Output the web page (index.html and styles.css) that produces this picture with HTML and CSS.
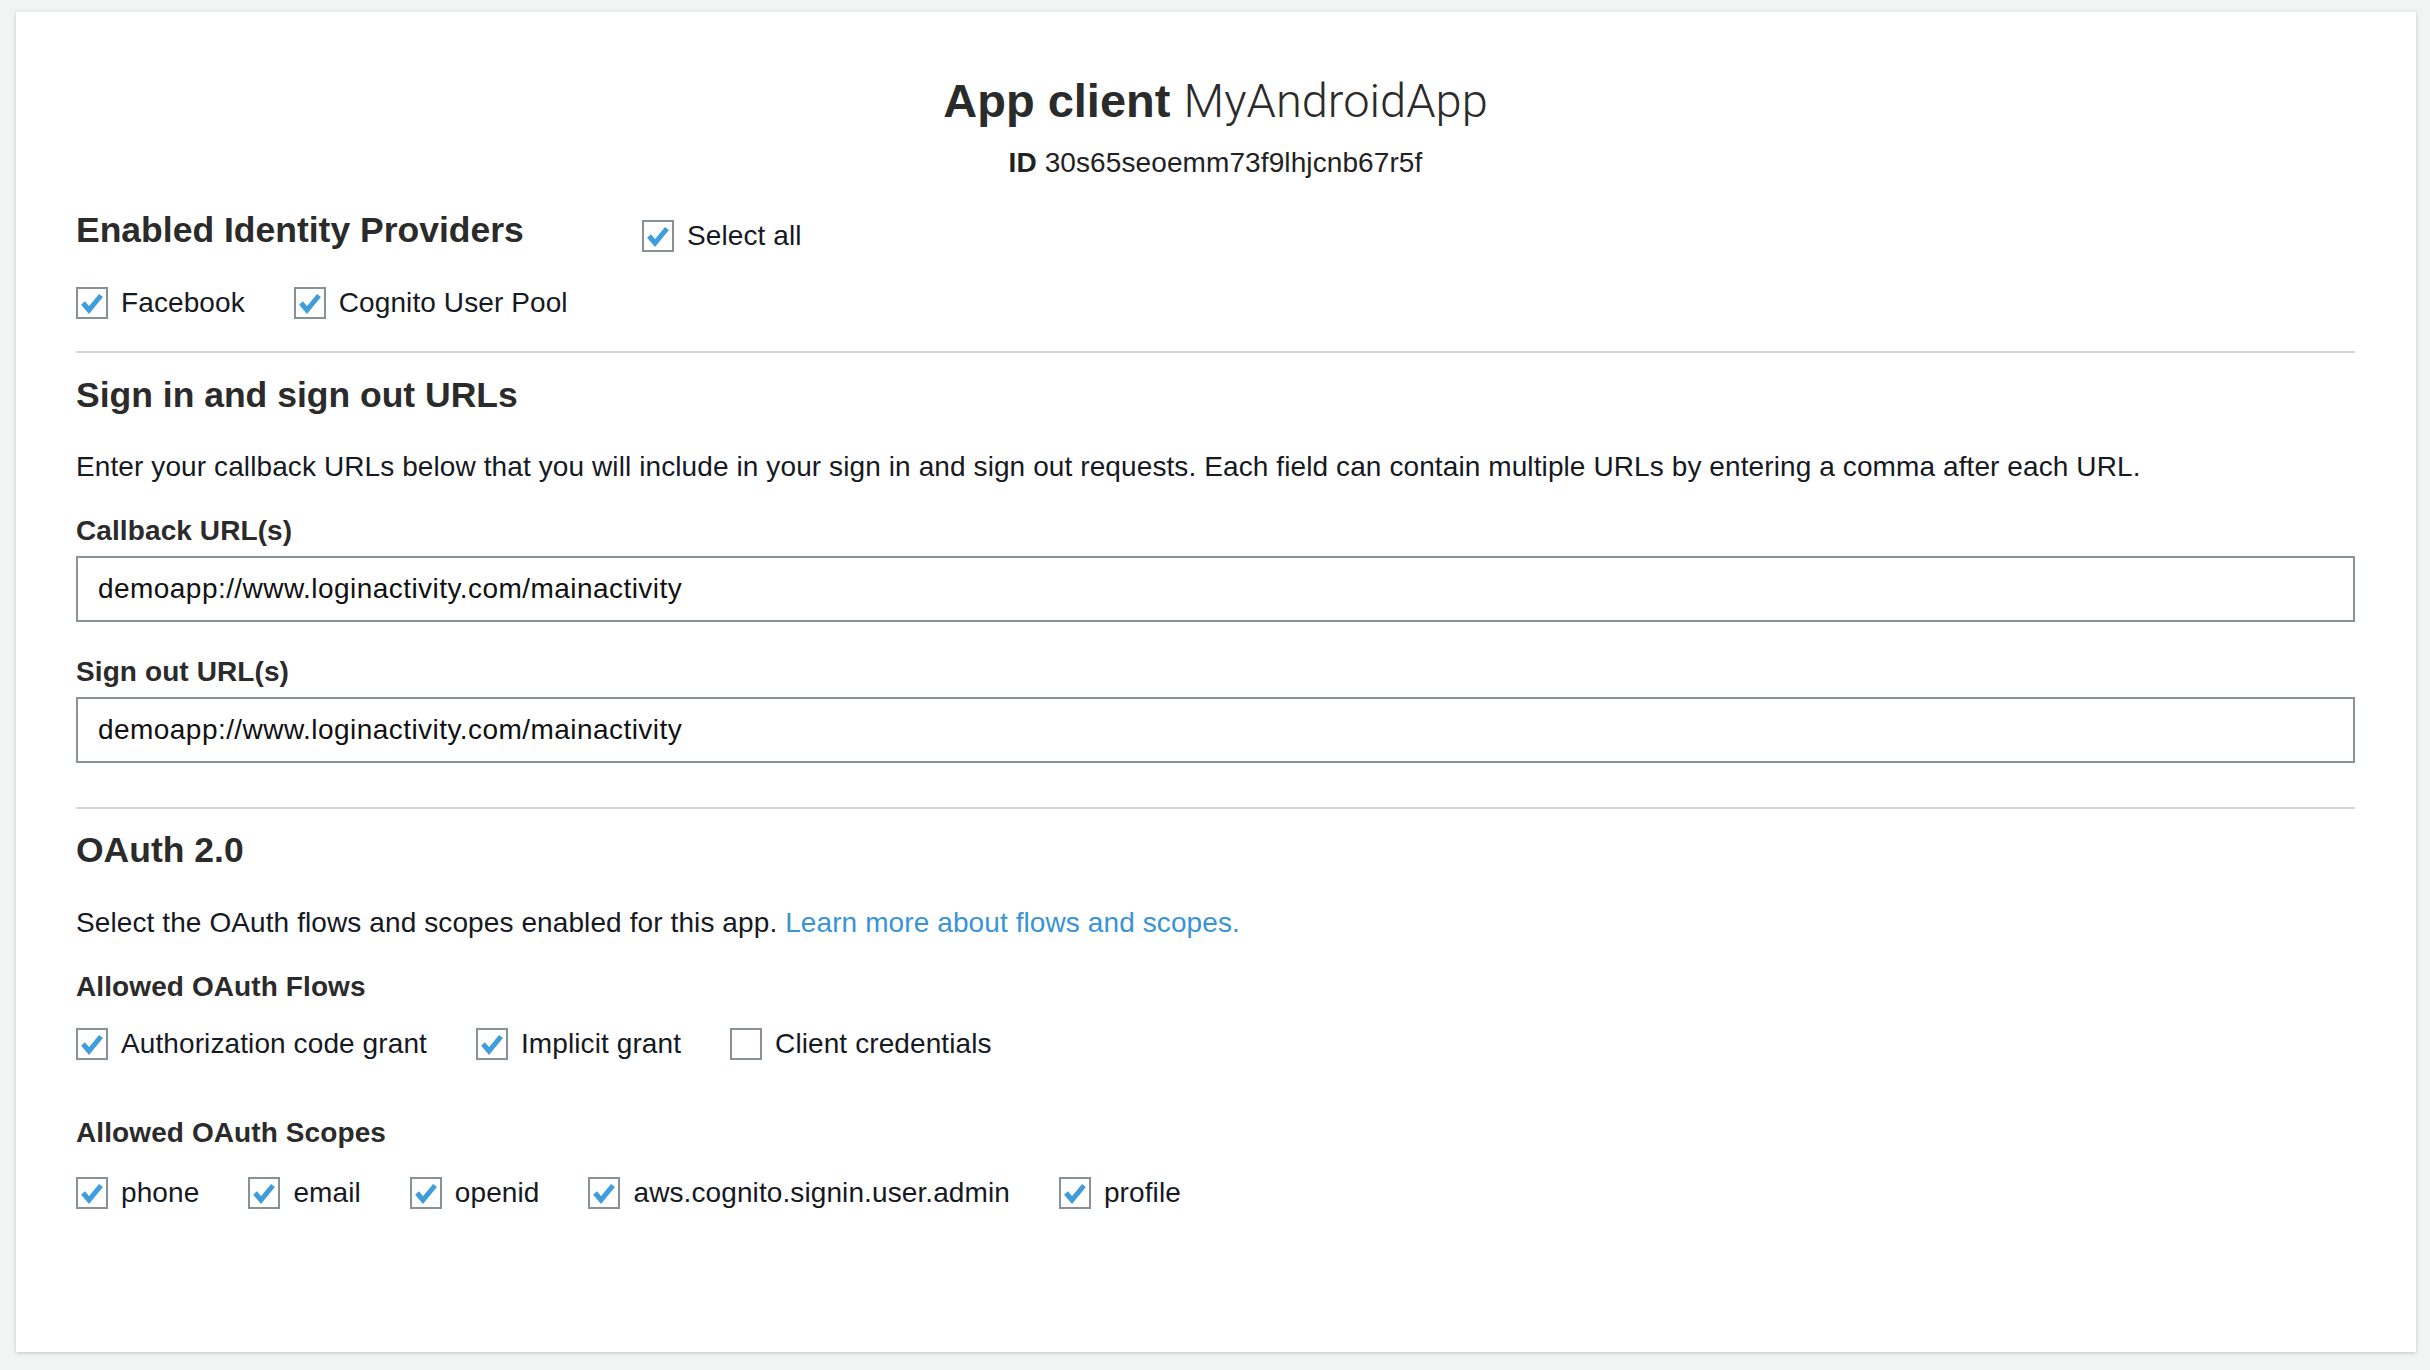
FILE: index.html
```html
<!DOCTYPE html>
<html lang="en">
<head>
<meta charset="utf-8">
<title>App client MyAndroidApp</title>
<link rel="stylesheet" href="styles.css">
</head>
<body>
<div class="card">
  <h1 class="title"><b>App client</b> <span class="thin">MyAndroidApp</span></h1>
  <div class="client-id"><b>ID</b> 30s65seoemm73f9lhjcnb67r5f</div>

  <div class="providers-head">
    <h2 class="heading heading-providers">Enabled Identity Providers</h2>
    <label class="check check-all"><span class="cb on"><svg viewBox="0 0 28 28"><path d="M5 14 L11 21 L23 6.5"/></svg></span>Select all</label>
  </div>
  <div class="check-row row-providers">
    <label class="check"><span class="cb on"><svg viewBox="0 0 28 28"><path d="M5 14 L11 21 L23 6.5"/></svg></span>Facebook</label>
    <label class="check"><span class="cb on"><svg viewBox="0 0 28 28"><path d="M5 14 L11 21 L23 6.5"/></svg></span>Cognito User Pool</label>
  </div>

  <hr class="rule rule-1">

  <h2 class="heading heading-urls">Sign in and sign out URLs</h2>
  <p class="para para-urls">Enter your callback URLs below that you will include in your sign in and sign out requests. Each field can contain multiple URLs by entering a comma after each URL.</p>
  <div class="label label-callback">Callback URL(s)</div>
  <div class="field">demoapp://www.loginactivity.com/mainactivity</div>
  <div class="label label-signout">Sign out URL(s)</div>
  <div class="field">demoapp://www.loginactivity.com/mainactivity</div>

  <hr class="rule rule-2">

  <h2 class="heading heading-oauth">OAuth 2.0</h2>
  <p class="para para-oauth">Select the OAuth flows and scopes enabled for this app. <a class="link" href="#">Learn more about flows and scopes.</a></p>
  <div class="label label-flows">Allowed OAuth Flows</div>
  <div class="check-row row-flows">
    <label class="check"><span class="cb on"><svg viewBox="0 0 28 28"><path d="M5 14 L11 21 L23 6.5"/></svg></span>Authorization code grant</label>
    <label class="check"><span class="cb on"><svg viewBox="0 0 28 28"><path d="M5 14 L11 21 L23 6.5"/></svg></span>Implicit grant</label>
    <label class="check"><span class="cb"></span>Client credentials</label>
  </div>
  <div class="label label-scopes">Allowed OAuth Scopes</div>
  <div class="check-row row-scopes">
    <label class="check"><span class="cb on"><svg viewBox="0 0 28 28"><path d="M5 14 L11 21 L23 6.5"/></svg></span>phone</label>
    <label class="check"><span class="cb on"><svg viewBox="0 0 28 28"><path d="M5 14 L11 21 L23 6.5"/></svg></span>email</label>
    <label class="check"><span class="cb on"><svg viewBox="0 0 28 28"><path d="M5 14 L11 21 L23 6.5"/></svg></span>openid</label>
    <label class="check"><span class="cb on"><svg viewBox="0 0 28 28"><path d="M5 14 L11 21 L23 6.5"/></svg></span>aws.cognito.signin.user.admin</label>
    <label class="check"><span class="cb on"><svg viewBox="0 0 28 28"><path d="M5 14 L11 21 L23 6.5"/></svg></span>profile</label>
  </div>
</div>
</body>
</html>
```

FILE: styles.css
```css
* { box-sizing: border-box; }

html, body {
  margin: 0;
  padding: 0;
  background: #f2f3f3;
}

body {
  font-family: "Liberation Sans", Arial, Helvetica, sans-serif;
  color: #16191f;
  font-size: 28px;
  letter-spacing: 0.1px;
  padding: 12px 14px 18px 16px;
}

.card {
  background: #ffffff;
  height: 1340px;
  padding: 61px 61px 0 60px;
  box-shadow: 0 1px 4px rgba(0, 0, 0, 0.18);
}

.title {
  margin: 0;
  text-align: center;
  font-size: 47px;
  line-height: 56px;
  letter-spacing: 0;
  font-weight: normal;
  color: #2b2b2b;
}

.title b { font-weight: bold; }

.title .thin {
  font-family: Roboto, "Liberation Sans", sans-serif;
  font-weight: 300;
}

.client-id {
  margin-top: 16px;
  text-align: center;
  line-height: 36px;
  color: #222;
}

.heading {
  margin: 0;
  font-size: 35.5px;
  line-height: 44px;
  letter-spacing: 0;
  font-weight: bold;
  color: #2b2b2b;
}

.providers-head {
  display: grid;
  grid-template-columns: 566px auto;
  align-items: center;
  margin-top: 30px;
  height: 44px;
}

.providers-head .heading { position: relative; top: -3px; }

.check-row {
  display: flex;
  align-items: center;
  height: 36px;
}

.row-providers { margin-top: 30px; }
.row-flows { margin-top: 21px; }
.row-scopes { margin-top: 24px; }

.check {
  display: inline-flex;
  align-items: center;
  line-height: 36px;
  margin-right: 49px;
  color: #16191f;
}

.check-all { margin-top: 6px; }

.cb {
  width: 32px;
  height: 32px;
  border: 2px solid #879196;
  background: #fff;
  margin-right: 13px;
  flex: none;
  display: block;
}

.cb svg {
  display: block;
  width: 28px;
  height: 28px;
}

.cb svg path {
  fill: none;
  stroke: #3f9ddb;
  stroke-width: 5;
  stroke-linecap: butt;
  stroke-linejoin: miter;
}

.rule {
  border: 0;
  height: 2px;
  background: #d5d5d5;
  margin: 0;
}

.rule-1 { margin-top: 30px; }
.rule-2 { margin-top: 44px; }

.heading-urls { margin-top: 20px; }
.heading-oauth { margin-top: 19px; }

.para {
  margin: 0;
  line-height: 36px;
}

.para-urls { margin-top: 32px; }
.para-oauth { margin-top: 33px; }

.link {
  color: #3a93d6;
  text-decoration: none;
}

.label {
  font-weight: bold;
  line-height: 36px;
  color: #2b2b2b;
}

.label-callback { margin-top: 28px; }
.label-signout { margin-top: 32px; }
.label-flows { margin-top: 28px; }
.label-scopes { margin-top: 53px; }

.field {
  margin-top: 7px;
  height: 66px;
  border: 2px solid #8b9396;
  padding: 0 20px;
  display: flex;
  align-items: center;
  color: #111;
  background: #fff;
  letter-spacing: 0.45px;
}
```
